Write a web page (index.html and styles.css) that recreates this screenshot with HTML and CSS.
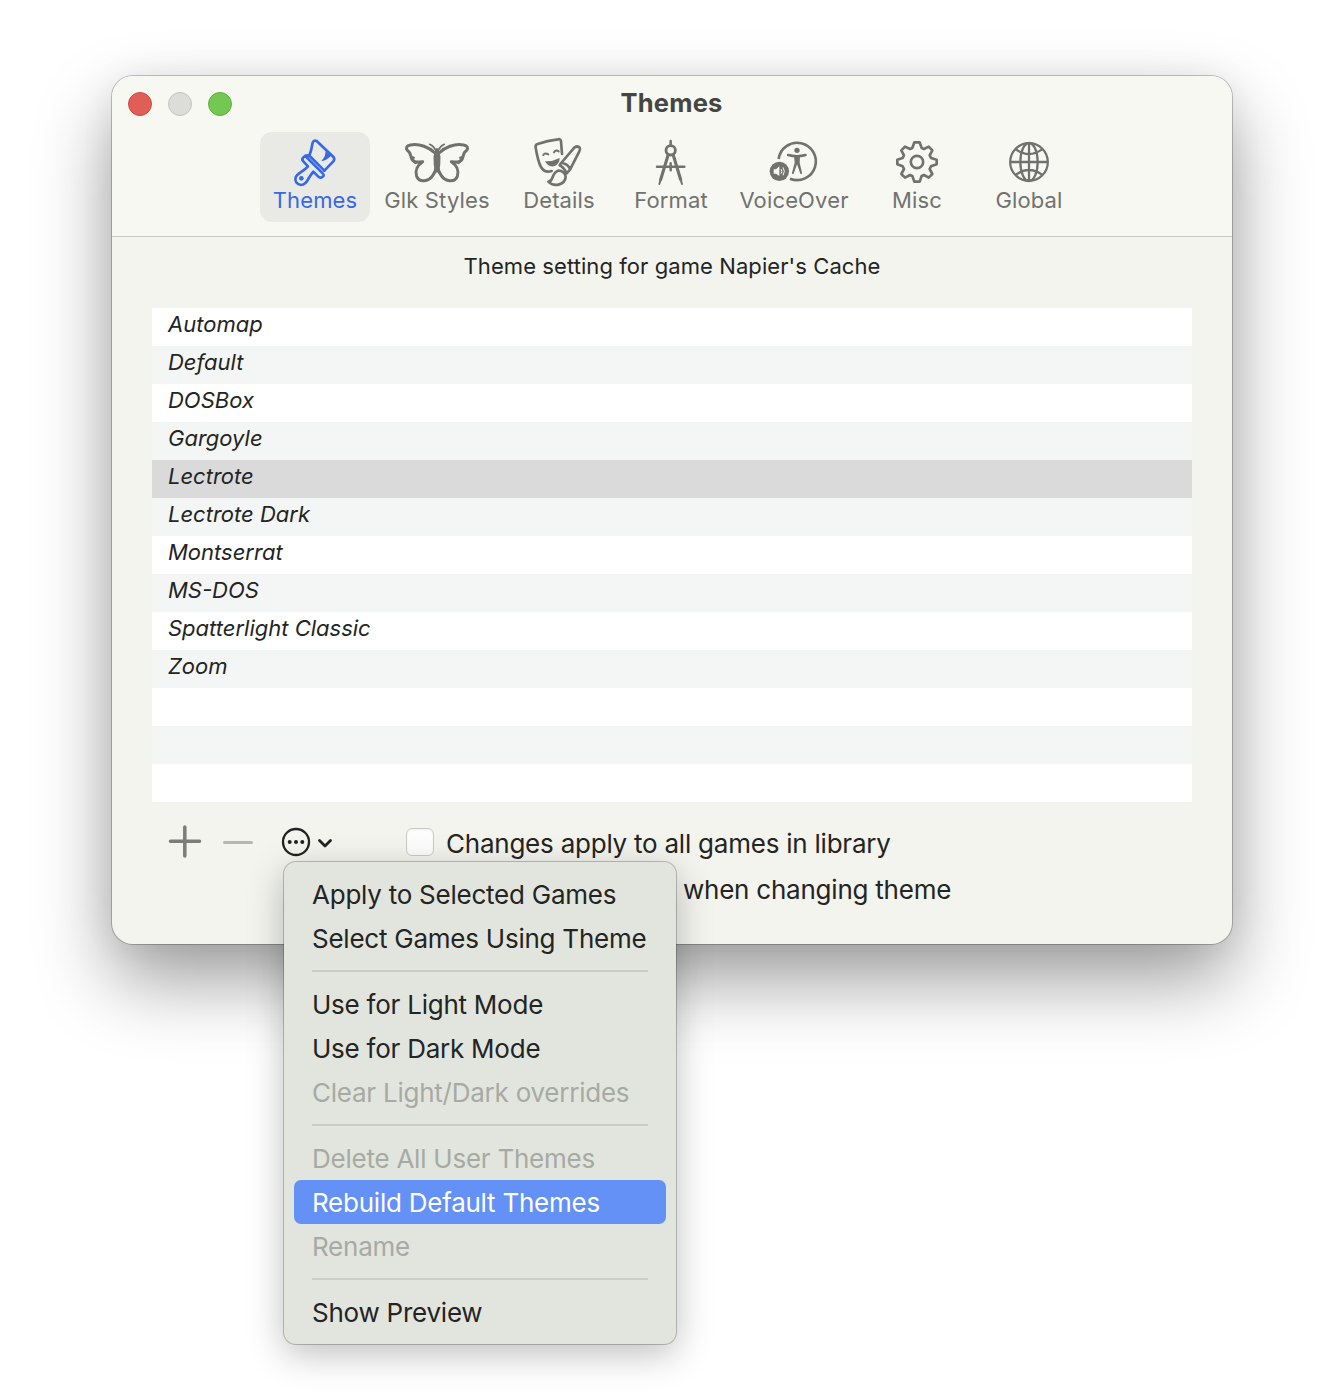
FILE: index.html
```html
<!DOCTYPE html>
<html lang="en">
<head>
<meta charset="utf-8">
<title>Themes</title>
<link rel="stylesheet" href="styles.css">
</head>
<body>
<main class="window">
  <header class="header">
    <div class="titlebar">
      <div class="lights"><i class="light close"></i><i class="light minimize"></i><i class="light maximize"></i></div>
      <h1 class="title">Themes</h1>
    </div>
    <nav class="tabs">
      <div class="tab active">
        <svg class="icon" viewBox="87 33 216 162"><g fill="none" stroke="currentColor" stroke-width="8" stroke-linejoin="round" stroke-linecap="round"><path d="M178 91C184 80 185 65 188 53Q191 45 200 48L251 97Q255 103 250 109L223 137"/><path d="M166 93L218 145Q224 151 218 155Q211 161 205 155L190 140Q184 148 177 158C172 169 166 180 153 180C141 179 133 169 137 157C142 144 158 142 174 124L160 109Q154 103 160 97Q169 88 179 93L223 137"/></g><path fill="currentColor" d="M226 79Q229 92 214 108Q228 108 243 92Z"/><circle cx="154" cy="160" r="7" fill="currentColor"/></svg>
        <span>Themes</span>
      </div>
      <div class="tab wide-a">
        <svg class="icon" viewBox="63 33 216 162"><g fill="none" stroke="currentColor" stroke-width="9" stroke-linejoin="round" stroke-linecap="round"><path d="M165 84C148 67 119 55 91 60C79 62 77 69 82 76C91 82 91 88 94 98C95 108 106 113 128 110C113 120 104 137 110 154C118 174 146 170 158 152Q166 141 168 128"/><path d="M177 84C194 67 223 55 251 60C263 62 265 69 260 76C251 82 251 88 248 98C247 108 236 113 214 110C229 120 238 137 232 154C224 174 196 170 184 152Q176 141 174 128"/><path stroke-width="5" d="M168 77Q161 63 149 58M174 77Q181 63 193 58"/></g><path fill="currentColor" d="M171 69Q179 73 177 82Q183 91 181 108Q182 131 171 145Q160 131 161 108Q159 91 165 82Q163 73 171 69Z"/><path fill="currentColor" d="M90 91L105 96L101 109L129 107Q115 115 106 118Q92 111 90 91ZM252 91L237 96L241 109L213 107Q227 115 236 118Q250 111 252 91Z"/></svg>
        <span>Glk Styles</span>
      </div>
      <div class="tab">
        <svg class="icon" viewBox="39 33 216 162"><g fill="none" stroke="currentColor" stroke-width="8" stroke-linejoin="round" stroke-linecap="round"><path d="M156 87L153 49Q152 41 144 43Q112 46 83 57Q75 60 77 68C81 91 84 110 93 126Q104 145 125 138"/><path d="M100 90Q104 82 115 88M132 82Q137 73 146 79" stroke-width="6"/><path d="M151 117L193 68Q203 61 209 68Q212 73 208 79L180 134L170 145Q160 126 149 121ZM157 114Q173 117 181 133"/><path d="M144 137C155 136 167 144 167 156C164 181 131 187 115 170C131 171 124 143 144 137Z"/></g><path fill="currentColor" d="M105 109Q128 110 149 99Q149 119 131 124Q113 126 105 109Z"/></svg>
        <span>Details</span>
      </div>
      <div class="tab">
        <svg class="icon" viewBox="30 33 216 162"><g fill="none" stroke="currentColor" stroke-linecap="round"><circle cx="137" cy="76" r="14" stroke-width="8.500"/><path stroke-width="7.500" d="M137 48V60M96 125H178M137 115V136"/><path stroke-width="9.500" d="M129 91L107 164M145 91L167 164"/><path stroke-width="6" d="M107 164L103 177M167 164L171 177"/></g></svg>
        <span>Format</span>
      </div>
      <div class="tab wide-b">
        <svg class="icon" viewBox="69 33 216 162"><g fill="none" stroke="currentColor"><path stroke-width="8" d="M131 102A56 56 0 1 1 165 161"/><path stroke-width="7" stroke-linecap="round" d="M159 90Q186 97 212 90"/></g><circle cx="186" cy="76" r="8" fill="currentColor"/><path fill="currentColor" d="M177 92H195L194 113L201 143Q201 150 196 146L186 118L176 146Q171 150 171 143L179 113Z"/><circle cx="133" cy="139" r="29" fill="currentColor"/><path class="cut-fill" d="M116 133H123L133 124V153L123 146H116Z"/><path class="cut-line" d="M138 132Q143 139 138 146M144 127Q152 139 144 151"/></svg>
        <span>VoiceOver</span>
      </div>
      <div class="tab">
        <svg class="icon" viewBox="3 33 216 162"><g fill="none" stroke="currentColor" stroke-width="8" stroke-linejoin="round"><path d="M103 52H119Q122 61 125 69L132 72L146 65L157 76L149 91L153 99L170 104V118L153 124L149 132L157 147L146 158L132 150L125 153L119 170H103L97 153L90 150L75 158L64 147L72 132L68 124L52 118V104L68 99L72 91L64 76L75 65L90 72L97 69Z"/><circle cx="111" cy="111" r="18.500" stroke-width="8"/></g></svg>
        <span>Misc</span>
      </div>
      <div class="tab">
        <svg class="icon" viewBox="339 33 216 162"><g fill="none" stroke="currentColor" stroke-width="6.800"><circle cx="447" cy="111" r="56.500"/><path d="M447 54V168M390 111H504M408 73Q447 101 486 73M408 149Q447 121 486 149"/><ellipse cx="447" cy="111" rx="26" ry="57"/></g></svg>
        <span>Global</span>
      </div>
    </nav>
  </header>
  <section class="content">
    <p class="caption">Theme setting for game Napier's Cache</p>
    <ul class="list">
      <li>Automap</li><li>Default</li><li>DOSBox</li><li>Gargoyle</li><li class="selected">Lectrote</li><li>Lectrote Dark</li><li>Montserrat</li><li>MS-DOS</li><li>Spatterlight Classic</li><li>Zoom</li><li></li><li></li><li></li>
    </ul>
    <footer class="footer">
      <svg class="actions" width="184" height="40" viewBox="0 0 184 40" fill="none" stroke-linecap="round"><path d="M18.500 19.200H47.500M32.800 5V34" stroke="#7b7d78" stroke-width="3.500"/><path d="M72.500 20.500H99.500" stroke="#b5b7b1" stroke-width="3"/><circle cx="144" cy="20" r="13" stroke="#222" stroke-width="2.300"/><g fill="#222"><circle cx="137.700" cy="20" r="2"/><circle cx="144" cy="20" r="2"/><circle cx="150.300" cy="20" r="2"/></g><path d="M167.500 18.500L173 24L178.500 18.500" stroke="#222" stroke-width="2.800" stroke-linejoin="round"/></svg>
      <div class="options">
        <div class="option"><i class="checkbox"></i><span>Changes apply to all games in library</span></div>
        <div class="option trailing"><span>when changing theme</span></div>
      </div>
    </footer>
  </section>
</main>
<div class="menu">
  <div class="item">Apply to Selected Games</div>
  <div class="item">Select Games Using Theme</div>
  <hr>
  <div class="item">Use for Light Mode</div>
  <div class="item">Use for Dark Mode</div>
  <div class="item disabled">Clear Light/Dark overrides</div>
  <hr>
  <div class="item disabled">Delete All User Themes</div>
  <div class="item highlighted">Rebuild Default Themes</div>
  <div class="item disabled">Rename</div>
  <hr>
  <div class="item">Show Preview</div>
</div>
</body>
</html>
```
FILE: styles.css
```css
* { box-sizing: border-box; }
body { margin: 0; height: 1398px; padding: 76px 112px; background: #fff; font-family: Inter, "Liberation Sans", sans-serif; color: #232423; position: relative; overflow: hidden; }
.window { width: 1120px; height: 868px; border-radius: 21px; background: #f3f4ee; box-shadow: 0 0 0 1px rgba(0,0,0,.22), 0 36px 76px rgba(0,0,0,.39), 0 0 36px rgba(0,0,0,.06); }
.header { height: 161px; background: #f7f8f2; border-bottom: 1px solid #c8c9c4; border-radius: 21px 21px 0 0; }
.titlebar { height: 56px; display: grid; grid-template-columns: 200px 1fr 200px; }
.lights { display: flex; gap: 16px; padding: 16px; }
.light { width: 24px; height: 24px; border-radius: 50%; border: 1px solid; }
.close { background: #df5f57; border-color: #cf4a43; }
.minimize { background: #dcddd8; border-color: #c3c4be; }
.maximize { background: #74c751; border-color: #5cb33c; }
.title { margin: 0; padding-right: 1px; font-size: 25.5px; letter-spacing: .2px; line-height: 54px; text-align: center; font-weight: 700; color: #454643; }
.tabs { display: flex; gap: 2px; margin-left: 148px; }
.tab { width: 110px; height: 90px; padding-top: 4px; border-radius: 12px; display: flex; flex-direction: column; align-items: center; color: #71726e; font-size: 22px; letter-spacing: .15px; line-height: 20px; white-space: nowrap; }
.tab.active { background: #e9eae5; color: #3768e8; }
.wide-a { width: 130px; }
.wide-b { width: 132px; }
.icon { width: 72px; height: 54px; }
.cut-fill { fill: #f7f8f2; }
.cut-line { fill: none; stroke: #f7f8f2; stroke-width: 3; }
.content { padding: 0 40px; }
.caption { margin: 0; height: 71px; line-height: 59px; text-align: center; font-size: 22px; letter-spacing: .08px; }
.list { list-style: none; margin: 0; padding: 0; background: #fff; }
.list li { height: 38px; padding-left: 16px; font-size: 22px; line-height: 32px; font-style: italic; letter-spacing: 0; }
.list li:nth-child(even) { background: #f4f6f5; }
.list li.selected { background: #dadada; }
.footer { display: flex; padding-top: 20px; }
.actions { flex: none; }
.options { padding-left: 70px; }
.option { display: flex; height: 46px; font-size: 26px; letter-spacing: -.23px; line-height: 44px; white-space: nowrap; }
.checkbox { width: 28px; height: 28px; margin: 6px 12px 0 0; border: 1px solid #c9cac5; border-radius: 6px; background: #fdfdfd; box-shadow: inset 0 1px 2px rgba(0,0,0,.06); }
.trailing { padding-left: 277px; }
.menu { position: absolute; left: 284px; top: 862px; width: 392px; height: 482px; padding: 10px; border-radius: 12px; background: #e2e5de; box-shadow: 0 0 0 1px rgba(0,0,0,.22), 0 10px 36px rgba(0,0,0,.26); }
.item { height: 44px; padding-left: 18px; border-radius: 7px; font-size: 26px; letter-spacing: -.24px; line-height: 46px; white-space: nowrap; }
.menu hr { height: 2px; margin: 10px 18px; border: 0; background: #cbcec7; }
.disabled { color: #a7aaa4; }
.highlighted { background: #6391f6; color: #fff; }
```
